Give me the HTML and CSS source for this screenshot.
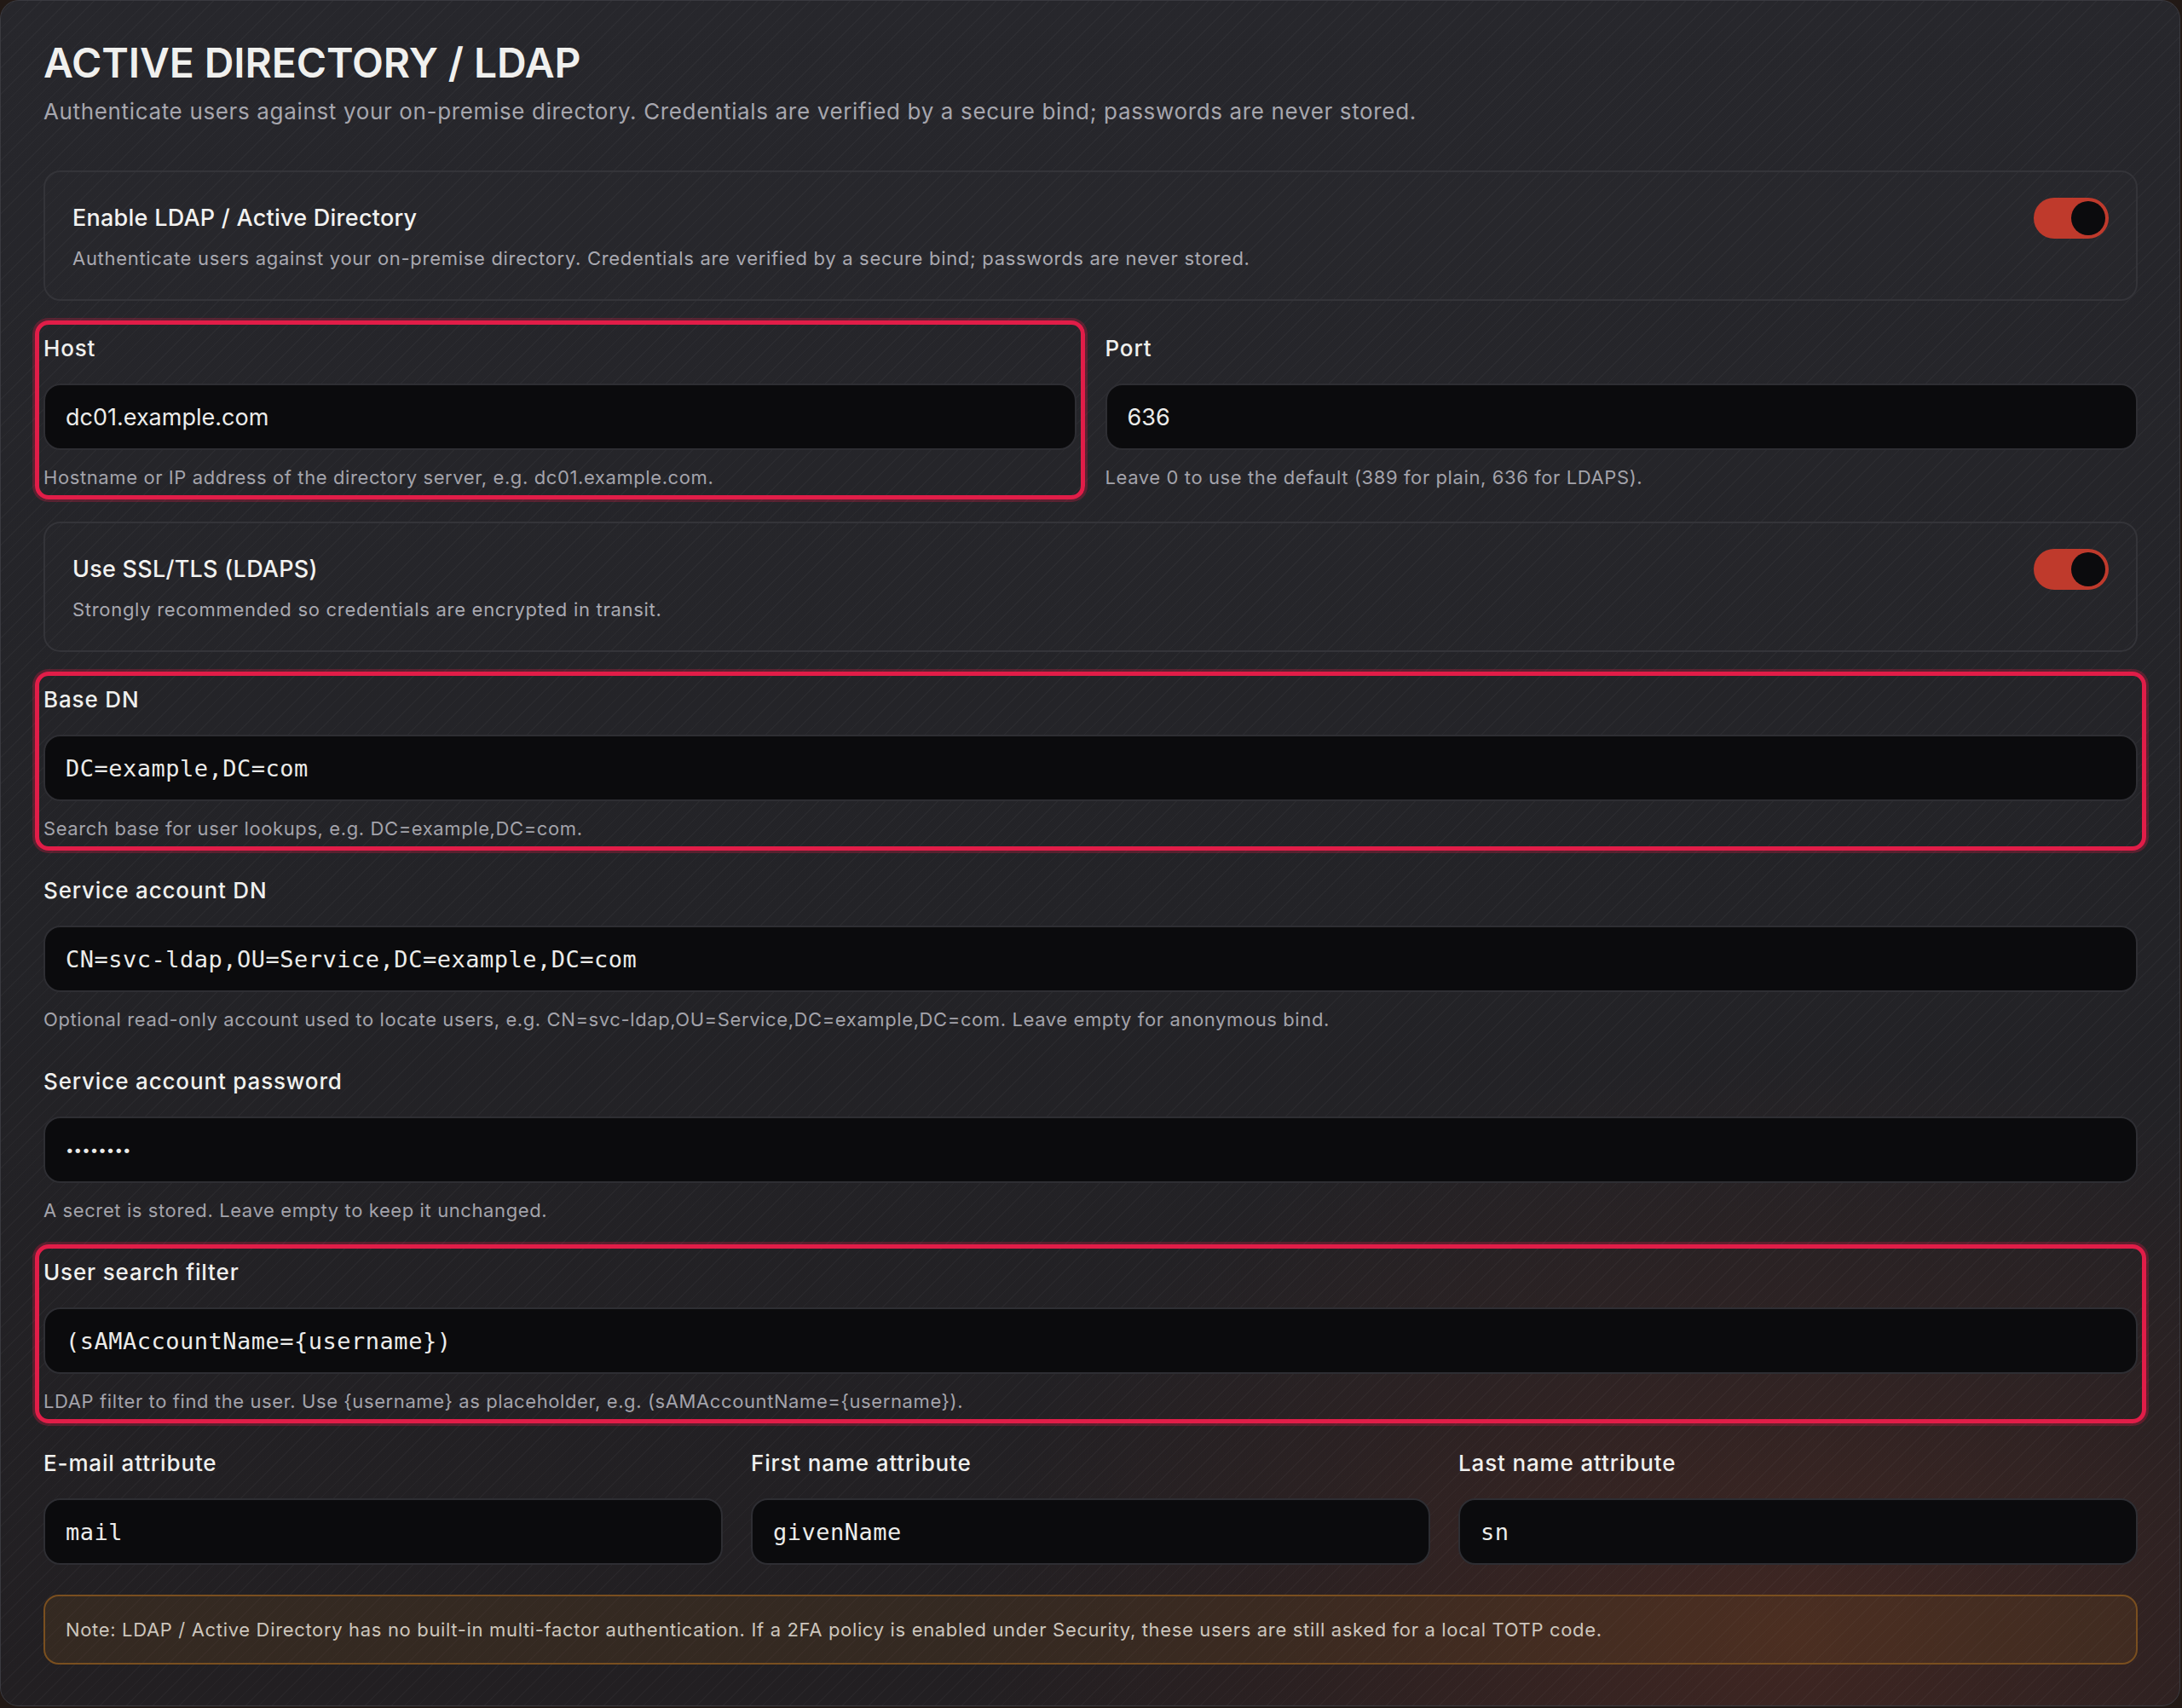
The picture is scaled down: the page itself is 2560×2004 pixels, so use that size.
FILE: index.html
```html
<!DOCTYPE html>
<html lang="en">
<head>
<meta charset="utf-8">
<title>Active Directory / LDAP</title>
<link rel="stylesheet" href="styles.css">
</head>
<body>
<main class="panel">
  <header class="panel-head">
    <h1 class="panel-title">ACTIVE DIRECTORY / LDAP</h1>
    <p class="panel-sub">Authenticate users against your on-premise directory. Credentials are verified by a secure bind; passwords are never stored.</p>
  </header>

  <div class="stack">
    <section class="switch-card">
      <div class="switch-text">
        <div class="switch-title">Enable LDAP / Active Directory</div>
        <div class="switch-desc">Authenticate users against your on-premise directory. Credentials are verified by a secure bind; passwords are never stored.</div>
      </div>
      <span class="toggle is-on" role="switch" aria-checked="true"><span class="toggle-knob"></span></span>
    </section>

    <div class="row row-2">
      <div class="field field-hl">
        <label class="field-label">Host</label>
        <div class="input" role="textbox">dc01.example.com</div>
        <div class="field-help">Hostname or IP address of the directory server, e.g. dc01.example.com.</div>
      </div>
      <div class="field">
        <label class="field-label">Port</label>
        <div class="input" role="textbox">636</div>
        <div class="field-help">Leave 0 to use the default (389 for plain, 636 for LDAPS).</div>
      </div>
    </div>

    <section class="switch-card">
      <div class="switch-text">
        <div class="switch-title">Use SSL/TLS (LDAPS)</div>
        <div class="switch-desc">Strongly recommended so credentials are encrypted in transit.</div>
      </div>
      <span class="toggle is-on" role="switch" aria-checked="true"><span class="toggle-knob"></span></span>
    </section>

    <div class="field field-hl">
      <label class="field-label">Base DN</label>
      <div class="input input-mono" role="textbox">DC=example,DC=com</div>
      <div class="field-help">Search base for user lookups, e.g. DC=example,DC=com.</div>
    </div>

    <div class="field">
      <label class="field-label">Service account DN</label>
      <div class="input input-mono" role="textbox">CN=svc-ldap,OU=Service,DC=example,DC=com</div>
      <div class="field-help">Optional read-only account used to locate users, e.g. CN=svc-ldap,OU=Service,DC=example,DC=com. Leave empty for anonymous bind.</div>
    </div>

    <div class="field">
      <label class="field-label">Service account password</label>
      <div class="input input-secret" role="textbox">••••••••</div>
      <div class="field-help">A secret is stored. Leave empty to keep it unchanged.</div>
    </div>

    <div class="field field-hl">
      <label class="field-label">User search filter</label>
      <div class="input input-mono" role="textbox">(sAMAccountName={username})</div>
      <div class="field-help">LDAP filter to find the user. Use {username} as placeholder, e.g. (sAMAccountName={username}).</div>
    </div>

    <div class="row row-3">
      <div class="field">
        <label class="field-label">E-mail attribute</label>
        <div class="input input-mono" role="textbox">mail</div>
      </div>
      <div class="field">
        <label class="field-label">First name attribute</label>
        <div class="input input-mono" role="textbox">givenName</div>
      </div>
      <div class="field">
        <label class="field-label">Last name attribute</label>
        <div class="input input-mono" role="textbox">sn</div>
      </div>
    </div>

    <div class="note">Note: LDAP / Active Directory has no built-in multi-factor authentication. If a 2FA policy is enabled under Security, these users are still asked for a local TOTP code.</div>
  </div>
</main>
</body>
</html>
```

FILE: styles.css
```css
* {
  box-sizing: border-box;
}

html,
body {
  margin: 0;
  padding: 0;
}

body {
  background: #221915;
  font-family: "Inter", "Lato", "Noto Sans", sans-serif;
  color: #ececee;
  min-height: 100vh;
}

/* outer settings panel with a faint diagonal hatch and a warm glow low right */
.panel {
  width: 2558px;
  min-height: 2002px;
  border: 1px solid #3a3a40;
  border-radius: 22px;
  padding: 44px 49px 48px 50px;
  background:
    repeating-linear-gradient(135deg,
      rgba(255, 255, 255, 0.028) 0 1px,
      rgba(255, 255, 255, 0) 1px 11px),
    radial-gradient(ellipse 1300px 900px at 82% 96%,
      rgba(120, 52, 34, 0.34) 0%,
      rgba(90, 40, 30, 0.16) 45%,
      rgba(0, 0, 0, 0) 75%),
    linear-gradient(180deg, #27272c 0%, #232327 55%, #221f22 100%);
}

.panel-title {
  margin: 0;
  font-size: 48px;
  line-height: 58px;
  font-weight: 600;
  letter-spacing: -0.1px;
  color: #f0f0ee;
}

.panel-sub {
  margin: 8px 0 0;
  font-size: 26px;
  line-height: 39px;
  letter-spacing: 0.65px;
  color: #a6a6ae;
}

.stack {
  margin-top: 50px;
  display: flex;
  flex-direction: column;
  gap: 35px;
}

/* boxed on/off setting */
.switch-card {
  display: flex;
  align-items: flex-start;
  justify-content: space-between;
  gap: 32px;
  height: 153px;
  padding: 30px 32px 30px 32px;
  border: 2px solid #343439;
  border-radius: 20px;
  background: rgba(255, 255, 255, 0.008);
}

.switch-title {
  font-size: 27px;
  line-height: 48px;
  font-weight: 500;
  letter-spacing: 0.25px;
  color: #f2f2f0;
}

.switch-desc {
  margin-top: 7px;
  font-size: 22px;
  line-height: 33px;
  letter-spacing: 0.7px;
  color: #a9a9b1;
}

.toggle {
  flex: none;
  position: relative;
  width: 88px;
  height: 48px;
  border-radius: 24px;
  background: #3a3a40;
}

.toggle.is-on {
  background: #bf3a2c;
}

.toggle-knob {
  position: absolute;
  top: 4px;
  left: 4px;
  width: 40px;
  height: 40px;
  border-radius: 50%;
  background: #0b0b0d;
}

.toggle.is-on .toggle-knob {
  left: 44px;
}

/* form fields */
.row {
  display: grid;
}

.row-2 {
  grid-template-columns: 1fr 1fr;
  column-gap: 34px;
}

.row-3 {
  grid-template-columns: 1fr 1fr 1fr;
  column-gap: 33px;
}

.field {
  position: relative;
  display: flex;
  flex-direction: column;
}

.field-label {
  display: block;
  font-size: 26px;
  line-height: 42px;
  font-weight: 500;
  letter-spacing: 0.85px;
  color: #f0f0ee;
}

.input {
  margin-top: 20px;
  height: 78px;
  display: flex;
  align-items: center;
  padding: 0 24px;
  border: 2px solid #2e2e33;
  border-radius: 20px;
  background: #0b0b0d;
  font-size: 27px;
  color: #ececea;
  white-space: nowrap;
  overflow: hidden;
}

.input-mono {
  font-family: "DejaVu Sans Mono", "Liberation Mono", monospace;
  font-size: 27px;
  letter-spacing: 0.5px;
}

.input-secret {
  font-size: 17px;
  letter-spacing: 0;
}

.field-help {
  margin-top: 16px;
  font-size: 22px;
  line-height: 33px;
  letter-spacing: 0.6px;
  color: #a3a3ab;
}

/* fields flagged for attention get a red ring */
.field-hl::after {
  content: "";
  position: absolute;
  top: -12px;
  right: -10px;
  bottom: -9px;
  left: -10px;
  border: 5px solid #e11d48;
  border-radius: 16px;
  box-shadow: 0 0 0 3px rgba(225, 29, 72, 0.28);
  pointer-events: none;
}

.note {
  padding: 22px 24px;
  border: 2px solid #7a4f1f;
  border-radius: 18px;
  background: rgba(120, 78, 30, 0.22);
  font-size: 22px;
  line-height: 34px;
  letter-spacing: 0.66px;
  color: #cdc6bd;
}
```
